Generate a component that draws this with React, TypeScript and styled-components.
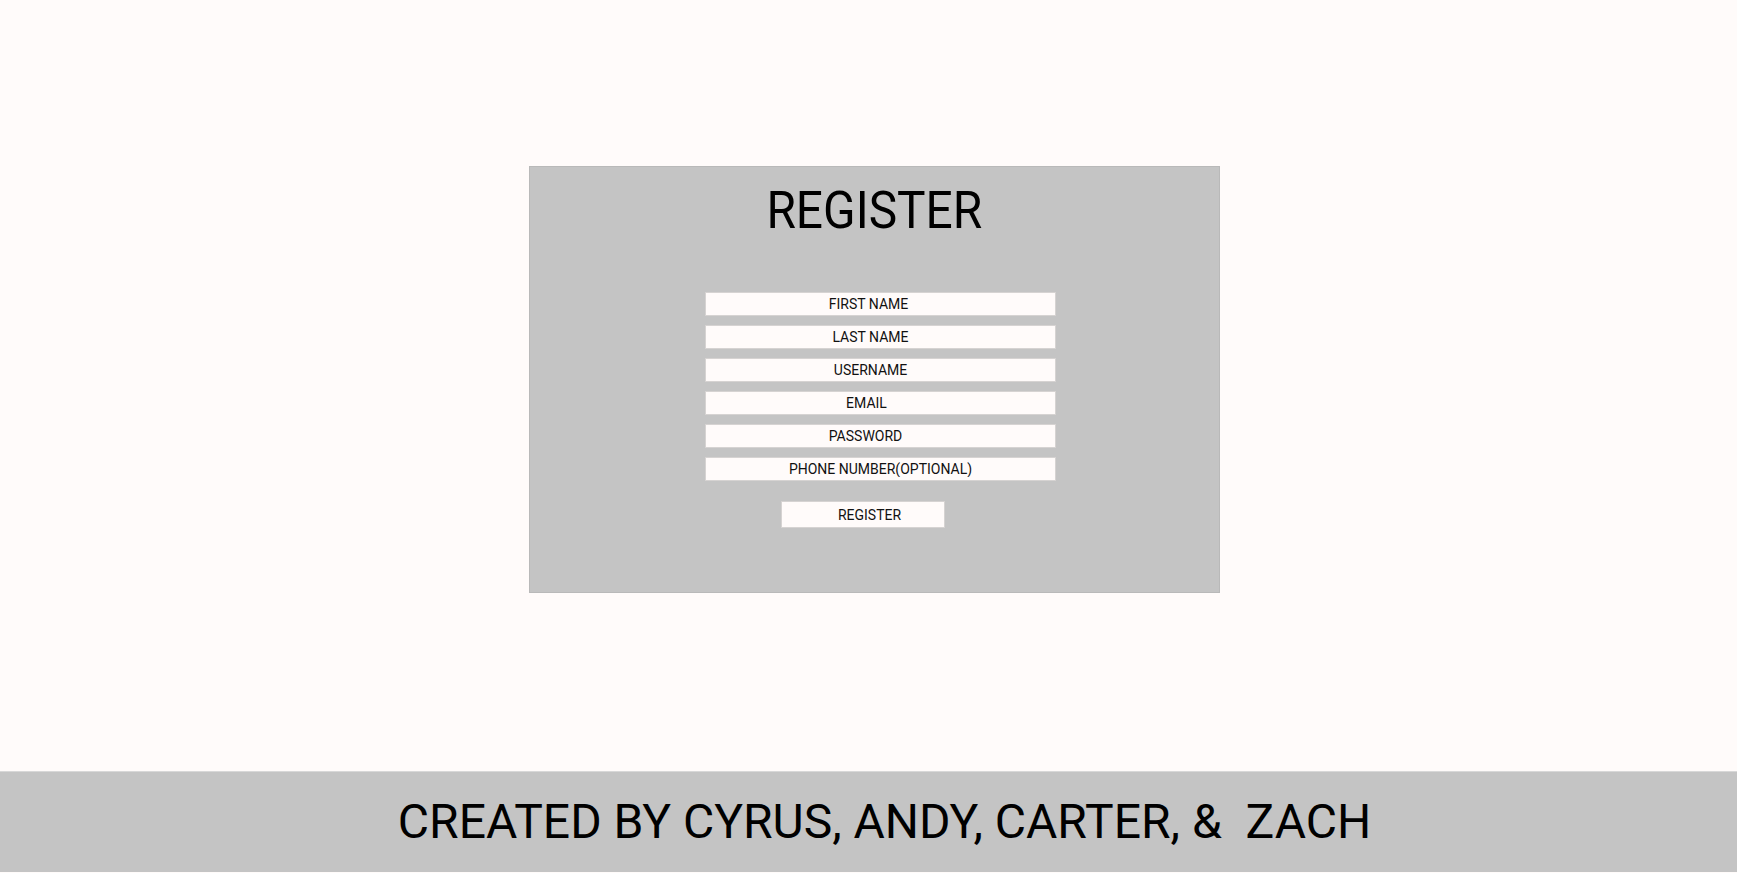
import React from 'react'
import styled, { createGlobalStyle } from 'styled-components'

const GlobalStyle = createGlobalStyle`
  html, body {
    margin: 0;
    padding: 0;
    background: #fffbfa;
    font-family: Roboto, "Liberation Sans", sans-serif;
  }
`

const Page = styled.div`
  display: flex;
  flex-direction: column;
  width: 1737px;
  height: 873px;
`

const Main = styled.main`
  flex: 0 0 771px;
  display: flex;
  justify-content: center;
  align-items: flex-start;
  padding: 166px 0 0 12px;
  box-sizing: border-box;
`

const Card = styled.section`
  width: 691px;
  height: 427px;
  box-sizing: border-box;
  background: #c4c4c4;
  border: 1px solid #b9b9b9;
  display: flex;
  flex-direction: column;
  align-items: center;
  padding-top: 18px;
`

const Title = styled.h1`
  margin: 0 0 55px 0;
  font-size: 52px;
  line-height: 1;
  font-weight: 400;
  color: #000;
  transform: scaleX(0.92);
`

const Form = styled.form`
  display: flex;
  flex-direction: column;
  align-items: center;
  gap: 9px;
  margin-left: 12px;
`

const Field = styled.input<{ shift: number }>`
  width: 351px;
  height: 24px;
  box-sizing: border-box;
  border: 1px solid #d6d3d2;
  background: #fffbfa;
  font-family: Roboto, "Liberation Sans", sans-serif;
  font-size: 14px;
  text-align: center;
  padding: 0 ${({ shift }) => (shift < 0 ? -shift * 2 : 0)}px 0
    ${({ shift }) => (shift > 0 ? shift * 2 : 0)}px;
  outline: none;

  &::placeholder {
    color: #111;
    opacity: 1;
  }
`

const SubmitButton = styled.button`
  width: 164px;
  height: 27px;
  margin: 11px 36px 0 0;
  box-sizing: border-box;
  border: 1px solid #d6d3d2;
  background: #fffbfa;
  font-family: Roboto, "Liberation Sans", sans-serif;
  font-size: 14px;
  color: #111;
  padding: 0 0 0 14px;
  cursor: pointer;
`

const Footer = styled.footer`
  flex: 0 0 101px;
  display: flex;
  align-items: center;
  justify-content: center;
  background: #c4c4c4;
  border-top: 1px solid #d8d8d8;
  box-sizing: border-box;
  padding-left: 32px;
`

const Credits = styled.p`
  margin: 0;
  font-size: 48px;
  line-height: 1;
  color: #000;
  white-space: pre;
`

const FIELDS = [
  { name: 'firstName', label: 'FIRST NAME', shift: -12 },
  { name: 'lastName', label: 'LAST NAME', shift: -10 },
  { name: 'username', label: 'USERNAME', shift: -10 },
  { name: 'email', label: 'EMAIL', shift: -14 },
  { name: 'password', label: 'PASSWORD', shift: -15 },
  { name: 'phone', label: 'PHONE NUMBER(OPTIONAL)', shift: 0 },
]

export default function App() {
  return (
    <Page>
      <GlobalStyle />
      <Main>
        <Card>
          <Title>REGISTER</Title>
          <Form onSubmit={(e) => e.preventDefault()}>
            {FIELDS.map((f) => (
              <Field
                key={f.name}
                name={f.name}
                type={f.name === 'password' ? 'password' : 'text'}
                placeholder={f.label}
                shift={f.shift}
              />
            ))}
            <SubmitButton type="submit">REGISTER</SubmitButton>
          </Form>
        </Card>
      </Main>
      <Footer>
        <Credits>CREATED BY CYRUS, ANDY, CARTER, &amp;  ZACH</Credits>
      </Footer>
    </Page>
  )
}
